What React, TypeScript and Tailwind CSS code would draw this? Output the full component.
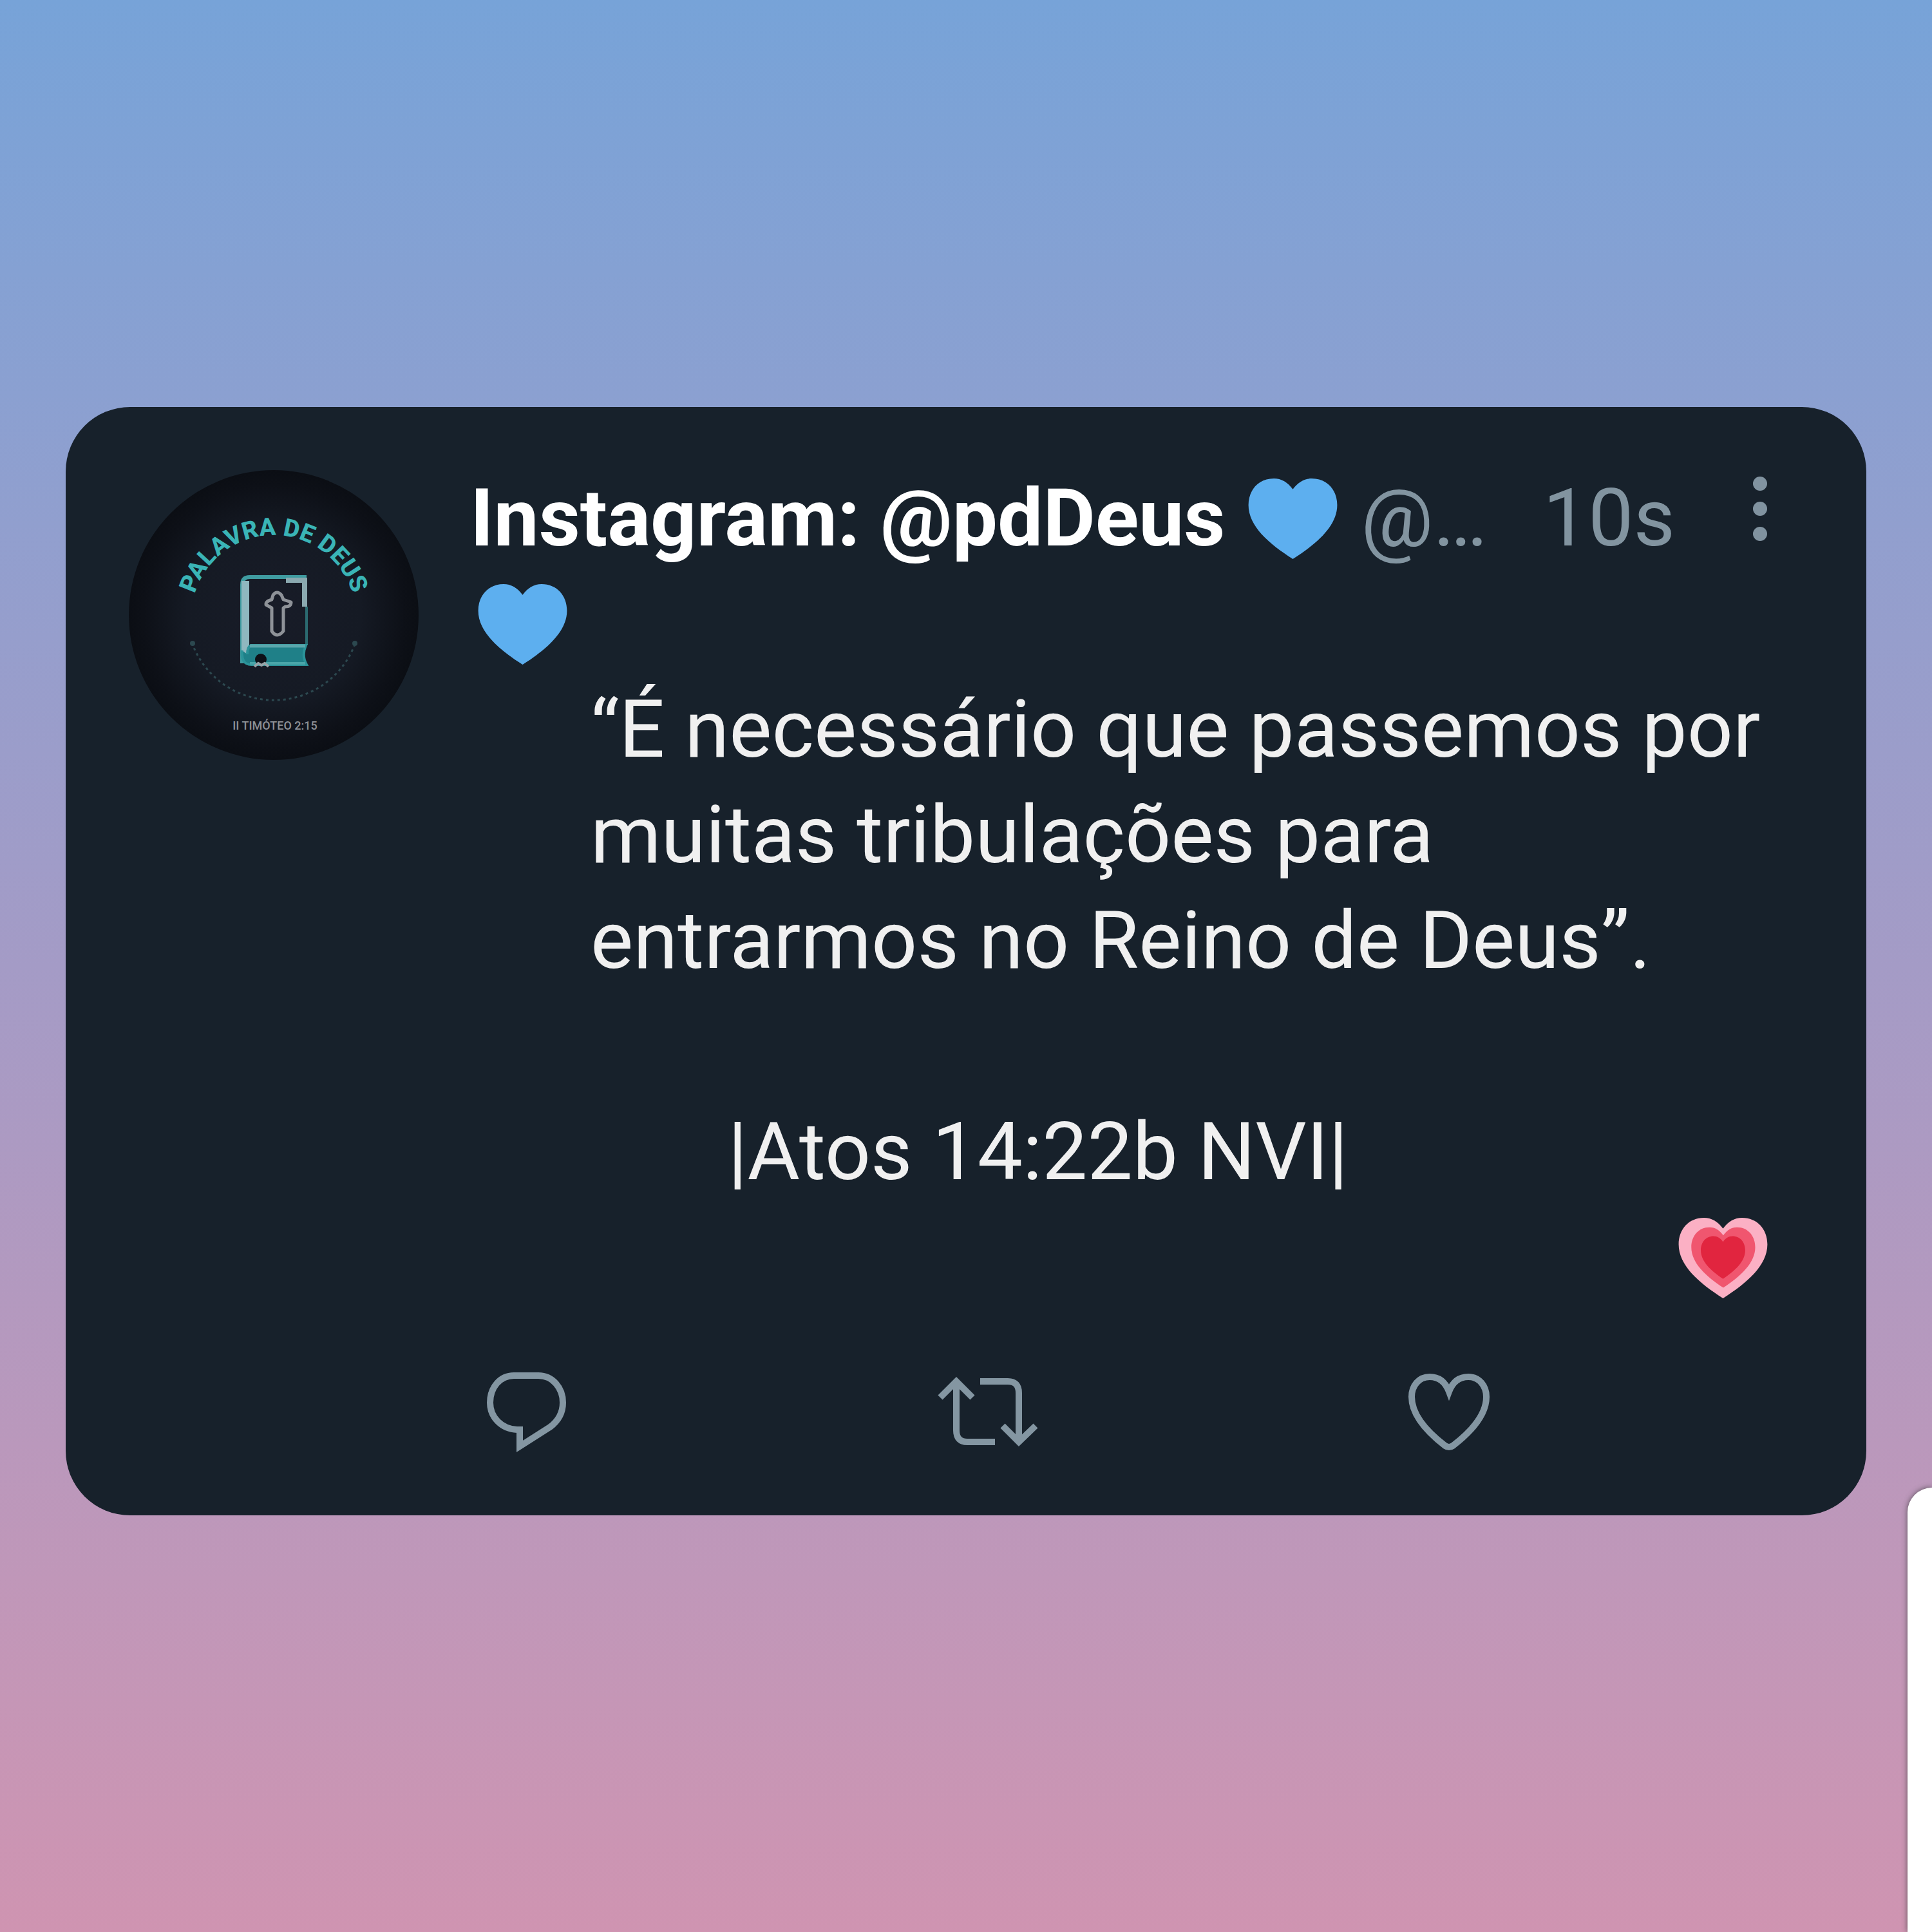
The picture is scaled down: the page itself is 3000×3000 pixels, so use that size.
import React from "react";

const HEART =
  "M70 17C62 6 52 0 40 0C16 0 0 18 0 42C0 75 32 103 70 127C108 103 140 75 140 42C140 18 124 0 100 0C88 0 78 6 70 17Z";

function BlueHeart() {
  return (
    <svg viewBox="0 0 140 127" className="h-[125px] w-[139px] shrink-0" role="img" aria-label="Blue heart">
      <path d={HEART} fill="#5dafef" />
    </svg>
  );
}

function GrowingHeart() {
  return (
    <svg viewBox="0 0 140 127" className="h-[125px] w-[139px] shrink-0" role="img" aria-label="Growing heart">
      <path d={HEART} fill="#fbb0c4" />
      <path d={HEART} fill="#f0566f" transform="translate(20 15) scale(0.72 0.75)" />
      <path d={HEART} fill="#e1253f" transform="translate(35 29) scale(0.5 0.53)" />
    </svg>
  );
}

function Avatar() {
  return (
    <svg viewBox="0 0 450 450" className="mt-[7px] h-[450px] w-[450px] shrink-0" role="img" aria-label="Palavra de Deus">
      <defs>
        <radialGradient id="disc">
          <stop offset="0" stopColor="#181c28" />
          <stop offset="0.6" stopColor="#151a24" />
          <stop offset="0.9" stopColor="#0d1017" />
          <stop offset="1" stopColor="#0b0e14" />
        </radialGradient>
        <path id="arch" d="M97 229A128 128 0 0 1 353 229" />
      </defs>
      <circle cx="225" cy="225" r="225" fill="url(#disc)" />
      <text fill="#3ab4b6" fontFamily="Roboto, sans-serif" fontWeight="800" fontSize="38" textAnchor="middle">
        <textPath href="#arch" startOffset="50%">PALAVRA DE DEUS</textPath>
      </text>
      <path d="M98 268A135 135 0 0 0 352 268" fill="none" stroke="#2c484f" strokeWidth="3" strokeDasharray="4 5" />
      <circle cx="99" cy="269" r="4" fill="#2c484f" />
      <circle cx="351" cy="269" r="4" fill="#2c484f" />
      <g fill="none">
        <path d="M176 300V178Q176 166 188 166H276" stroke="#3f9ba0" strokeWidth="6" />
        <path d="M181 172V286" stroke="#8fb7bf" strokeWidth="12" />
        <path d="M244 171H273V212" stroke="#8ba9b0" strokeWidth="8" />
        <path d="M276 212V272" stroke="#2b6a70" strokeWidth="4" />
        <path
          d="M176 280Q174 302 190 302H276Q268 288 275 272H190Q184 274 184 286"
          fill="#1f8088"
          stroke="#2b9399"
          strokeWidth="4"
        />
        <path d="M188 273H274" stroke="#5ba6ab" strokeWidth="5" />
        <path d="M188 300H274" stroke="#4aa5a9" strokeWidth="4" />
        <circle cx="205" cy="294" r="9" fill="#0d1017" />
        <path d="M195 305L201 300L206 303L211 300L217 305" stroke="#98a3a8" strokeWidth="4" />
        <path
          d="M224 194Q230 186 237 194L240 201L252 205Q252 212 243 212L240 214V250Q230 262 222 250V214L213 209Q212 204 222 201Z"
          stroke="#8e9298"
          strokeWidth="5"
          strokeLinejoin="round"
        />
      </g>
      <text x="227" y="403" fill="#8d9096" fontFamily="Roboto, sans-serif" fontWeight="500" fontSize="18" textAnchor="middle">
        II TIMÓTEO 2:15
      </text>
    </svg>
  );
}

function ActionButton({ label, viewBox, d }: { label: string; viewBox: string; d: string }) {
  return (
    <button type="button" aria-label={label} className="block">
      <svg viewBox={viewBox} className="h-[136px] w-[150px] overflow-visible" fill="none" stroke="#8496a2" strokeWidth="10">
        <path d={d} />
      </svg>
    </button>
  );
}

export default function App() {
  return (
    <main className="relative min-h-screen overflow-hidden bg-linear-to-b from-[#77a3d8] via-[#a49bc6] to-[#cf94b1] px-[102px] pt-[632px] font-['Roboto',sans-serif]">
      <article className="flex gap-[80px] rounded-[100px] bg-[#17212b] pt-[91px] pr-[153px] pb-[95px] pl-[98px]">
        <Avatar />
        <div className="min-w-0 flex-1 text-[125px] leading-[164px] text-[#f0f0f0]">
          <header className="flex h-[164px] items-start whitespace-nowrap text-[#8294a0]">
            <h1 className="font-bold text-white">Instagram: @pdDeus</h1>
            <div className="mt-5 ml-9">
              <BlueHeart />
            </div>
            <span className="ml-9">@…</span>
            <time className="ml-auto">10s</time>
            <button type="button" aria-label="More" className="mt-4 ml-[120px]">
              <svg viewBox="0 0 24 102" className="h-[102px] w-[24px]" fill="#8193a0">
                <circle cx="12" cy="12" r="11" />
                <circle cx="12" cy="51" r="11" />
                <circle cx="12" cy="90" r="11" />
              </svg>
            </button>
          </header>
          <div className="flex h-[164px] items-start pt-5 pl-3">
            <BlueHeart />
          </div>
          <p className="pl-[187px] whitespace-nowrap">
            “É necessário que passemos por
            <br />
            muitas tribulações para
            <br />
            entrarmos no Reino de Deus”.
          </p>
          <p className="mt-[164px] pl-[400px]">|Atos 14:22b NVI|</p>
          <div className="flex h-[164px] items-start justify-end pt-5">
            <GrowingHeart />
          </div>
          <footer className="mt-[87px] flex justify-between pr-[420px] pl-3">
            <ActionButton
              label="Reply"
              viewBox="21 32 150 136"
              d="M77 46H115C137 46 153 65 153 88C153 104 145 117 133 126L86 156V130H82C58 129 40 111 40 88C40 65 55 46 77 46Z"
            />
            <ActionButton
              label="Retweet"
              viewBox="29 32 150 136"
              d="M55 56V131Q55 149 72 149H115M30 80L55 55L80 80M92 55H135Q152 55 152 73V148M127 124L152 149L178 124"
            />
            <ActionButton
              label="Like"
              viewBox="25 32 150 136"
              d="M100 71C94 55 84 48 70 48C53 48 42 62 42 79C42 108 68 135 94 155Q100 159 106 155C132 135 158 108 158 79C158 62 147 48 130 48C116 48 106 55 100 71Z"
            />
          </footer>
        </div>
      </article>
      <div className="absolute top-[77%] right-0 bottom-0 w-[38px] rounded-tl-[50px] bg-white shadow-[0_0_8px_rgba(60,60,60,0.8)]" />
    </main>
  );
}
